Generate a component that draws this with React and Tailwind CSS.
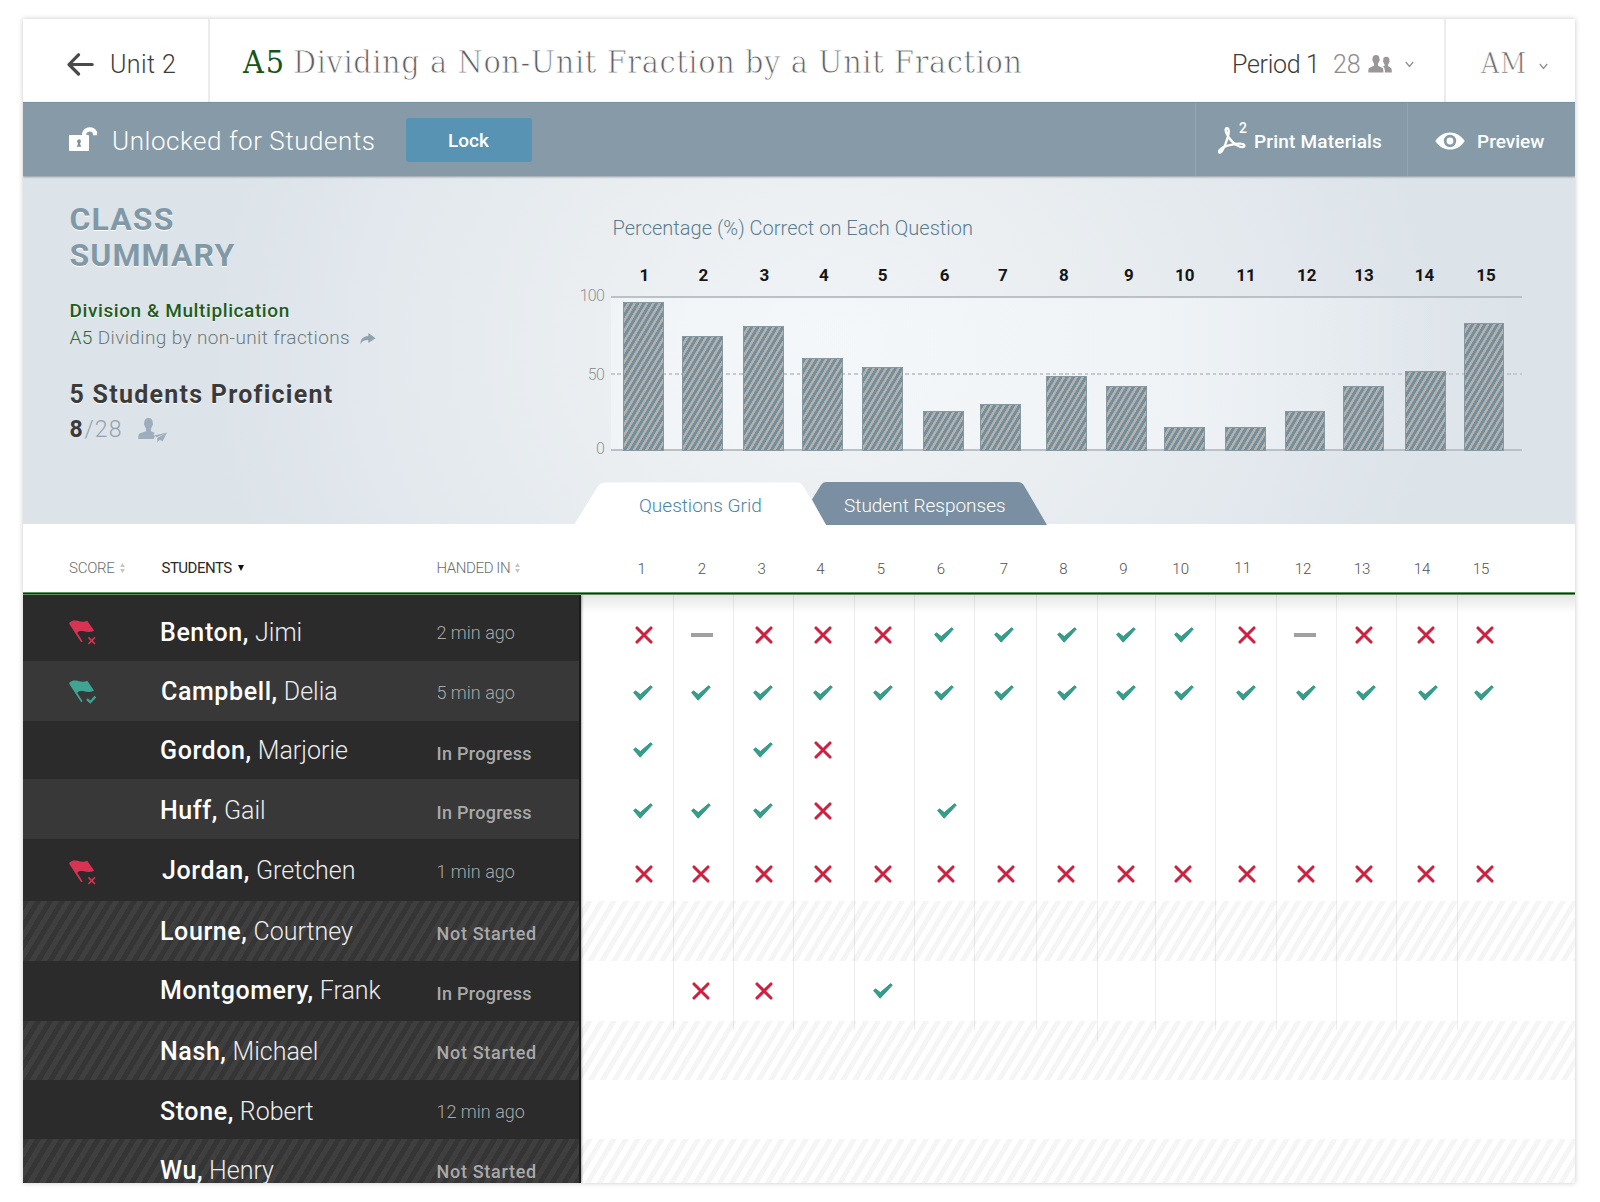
import React from "react";

const COLUMN_EDGES = [581, 673, 733, 793, 854, 914, 974, 1036, 1097, 1155, 1215, 1276, 1336, 1396, 1457, 1575];

const HEADINGS = [641.7, 702, 761.7, 820.5, 881, 941, 1004, 1063.5, 1123.3, 1180.7, 1242.7, 1303, 1362, 1422, 1481];

const MARK_CENTERS = {
  x: [643.7, 701, 763.7, 823.4, 883.3, 945.7, 1006, 1066, 1125.6, 1183, 1246.5, 1305.7, 1364, 1425.5, 1485],
  c: [643.3, 701, 763.3, 823, 882.7, 944, 1003.7, 1066.7, 1126.3, 1184.3, 1245.7, 1305.7, 1366, 1428, 1484.3],
  "-": [0, 702, 0, 0, 0, 0, 0, 0, 0, 0, 0, 1305.3, 0, 0, 0],
};

const BARS = [
  { left: 623.4, height: 149, label: 644.5 },
  { left: 682, height: 115.5, label: 703.3 },
  { left: 743.5, height: 125, label: 764.3 },
  { left: 802.3, height: 93, label: 824 },
  { left: 862.3, height: 84.5, label: 882.7 },
  { left: 923, height: 40.5, label: 944.7 },
  { left: 980.3, height: 47, label: 1003 },
  { left: 1046, height: 75.5, label: 1064 },
  { left: 1106.1, height: 65, label: 1129 },
  { left: 1164, height: 24.5, label: 1184.7 },
  { left: 1225, height: 24.5, label: 1246 },
  { left: 1285, height: 40.5, label: 1306.7 },
  { left: 1343.7, height: 65, label: 1364 },
  { left: 1405.3, height: 80, label: 1424.5 },
  { left: 1464, height: 128, label: 1486 },
];

const ROWS = [
  { last: "Benton,", first: "Jimi", when: "2 min ago", flag: "x", h: 66, name: 46.5, time: 44.3, mark: 40, flagTop: 25, marks: "x-xxxcccccx-xxx" },
  { last: "Campbell,", first: "Delia", when: "5 min ago", flag: "c", h: 60, name: 39.5, time: 38, mark: 32, flagTop: 19, marks: "ccccccccccccccc", shade: "light", indent: 1 },
  { last: "Gordon,", first: "Marjorie", when: "In Progress", h: 58, name: 38.5, time: 39.2, mark: 29, marks: "c cx           " },
  { last: "Huff,", first: "Gail", when: "In Progress", h: 60, name: 40.5, time: 40.2, mark: 32, marks: "cccx c         ", shade: "light" },
  { last: "Jordan,", first: "Gretchen", when: "1 min ago", flag: "x", h: 62, name: 40.5, time: 39.2, mark: 35, flagTop: 21, marks: "xxxxxxxxxxxxxxx", indent: 2 },
  { last: "Lourne,", first: "Courtney", when: "Not Started", h: 60, name: 39.5, time: 39.2, mark: 30, marks: "", shade: "stripe" },
  { last: "Montgomery,", first: "Frank", when: "In Progress", h: 60, name: 38.5, time: 39.2, mark: 30, marks: " xx c          " },
  { last: "Nash,", first: "Michael", when: "Not Started", h: 59, name: 39.5, time: 38.2, mark: 30, marks: "", shade: "stripe" },
  { last: "Stone,", first: "Robert", when: "12 min ago", h: 59, name: 40.5, time: 38.2, mark: 30, marks: "" },
  { last: "Wu,", first: "Henry", when: "Not Started", h: 44, name: 40.5, time: 39.2, mark: 30, marks: "", shade: "stripe" },
];

const SHADES = {
  dark: "bg-[#2b2b2b]",
  light: "bg-[#383838]",
  stripe: "bg-[repeating-linear-gradient(121deg,#353535_0,#353535_5.15px,#3f3f3f_5.15px,#3f3f3f_10.3px)]",
};

const STATUS_STYLES = {
  "In Progress": "font-medium tracking-[0.3px]",
  "Not Started": "font-medium tracking-[0.7px]",
};

function ArrowLeft() {
  return (
    <svg className="h-[23px] w-[27px]" viewBox="0 0 27 23" fill="none" stroke="#4a4a4a" strokeWidth="3.2" strokeLinecap="round" strokeLinejoin="round">
      <path d="M11.5 1.8 L2 11.5 L11.5 21 M2.5 11.5 H25.2" />
    </svg>
  );
}

function Chevron() {
  return (
    <svg className="h-[7px] w-[9px]" viewBox="0 0 9 7" fill="none" stroke="#8f8f8f" strokeWidth="1.3">
      <path d="M.8 1 L4.5 5.4 L8.2 1" />
    </svg>
  );
}

function People() {
  return (
    <svg className="h-[18px] w-[24px]" viewBox="0 0 24 18" fill="#9b9697">
      <path d="M8 0 C10.3 0 11.6 1.6 11.4 4 C11.9 4.2 11.8 5.8 11.1 6.2 C10.8 7.3 10.3 8 10 8.6 V10.4 C11 11.6 14.8 12 15.2 14 C15.4 15.2 15.4 16.3 15.4 17.5 H.3 C.3 16.3 .3 15.2 .5 14 C1 12 5 11.6 6 10.4 V8.6 C5.7 8 5.2 7.3 4.9 6.2 C4.2 5.8 4.1 4.2 4.6 4 C4.4 1.6 5.7 0 8 0Z" />
      <path d="M18.3 1.8 C20.6 1.8 21.7 3.4 21.4 5.4 C21.9 5.8 21.7 7 21.1 7.4 C20.9 8.4 20.3 9 20.1 9.6 V11 C21 12 23.2 12.4 23.6 14.2 C23.8 15.4 23.8 16.5 23.8 17.5 H16.9 C17 14.5 16.8 12.8 14.7 11.6 C15.6 11.5 16.3 11.3 16.6 10.8 V9.6 C16.3 9 15.8 8.4 15.6 7.4 C15 7 14.9 5.8 15.3 5.4 C15 3.4 16 1.8 18.3 1.8Z" />
    </svg>
  );
}

function Unlock() {
  return (
    <svg className="h-[27px] w-[29px]" viewBox="0 0 29 27">
      <path d="M15.2 11 V8.2 A6 6 0 0 1 26 7.5 V10.2" fill="none" stroke="#fff" strokeWidth="4.2" />
      <rect x="0" y="10" width="20" height="16" rx="1" fill="#fff" />
      <path d="M10 14.2 a2.1 2.1 0 0 1 1.1 3.8 l.3 2.6 h.8 v1.2 H7.8 v-1.2 h.8 l.3 -2.6 A2.1 2.1 0 0 1 10 14.2Z" fill="#7a93a1" />
    </svg>
  );
}

function Pdf() {
  return (
    <svg className="h-[28px] w-[28px]" viewBox="0 0 28 28" fill="none" stroke="#fff" strokeWidth="2.3" strokeLinejoin="round">
      <path d="M10.4 9.8 C8.2 6.3 6.3 1.6 8.8 1.2 C11.3 1 11 5.8 10 9.3 C8.5 15 6.2 20.6 3.8 24.4 C2.3 26.6 .4 25.6 1.2 23.8 C2.6 21 9 18.6 14 17.6 C19 16.6 25.3 16.3 26.4 18.4 C26.8 20.6 23 20.8 19.5 18.6 C15.6 16.2 12.2 12.8 10.4 9.8Z" />
    </svg>
  );
}

function Eye() {
  return (
    <svg className="h-[18px] w-[30px]" viewBox="0 0 30 18">
      <path d="M.3 9 C4 3.4 9 .4 15 .4 C21 .4 26 3.4 29.7 9 C26 14.6 21 17.6 15 17.6 C9 17.6 4 14.6 .3 9Z" fill="#fff" />
      <circle cx="15" cy="9" r="4.8" fill="none" stroke="#869ba7" strokeWidth="2.8" />
    </svg>
  );
}

function Share() {
  return (
    <svg className="h-[12px] w-[16px]" viewBox="0 0 16 12" fill="#8fa3af">
      <path d="M8.3 0 L15.6 5.2 L8.3 10 V7 C4.6 6.8 2 8 .6 11.3 C.2 6.2 3 3.4 8.3 3Z" />
    </svg>
  );
}

function PersonPlane() {
  return (
    <svg className="h-[25px] w-[30px]" viewBox="0 0 30 25" fill="#9dadbb">
      <path d="M10.5 0 C13.4 0 15 2 14.7 5 C15.3 5.3 15.1 7.2 14.3 7.7 C14 9.2 13.3 10 13 10.6 V13 C13.5 13.8 15.6 14.5 17 15 L15.2 16.3 L17 18 L15.6 21 H.3 C.3 19.4 .3 18 .6 16.8 C1.3 14.6 6.8 14.4 8 13 V10.6 C7.7 10 7 9.2 6.7 7.7 C5.9 7.2 5.7 5.3 6.3 5 C6 2 7.6 0 10.5 0Z" />
      <path d="M29 14.4 L16.2 17.6 L18.6 19.3 Z M29 14.4 L19.2 20 L19.4 24.4 L21.6 21.8 L24.6 23.2Z" />
    </svg>
  );
}

function Flag({ kind }) {
  const tone = kind === "x" ? "#d93253" : "#3fa492";
  return (
    <svg className="h-[26px] w-[28px]" viewBox="0 0 28 26">
      <path d="M.3 2.8 C4 -.8 8 .8 11.5 1.6 C14 2 16.5 1.6 18.3 .8 L25 10.6 C21 13 18 11.8 15 11.3 C12 10.9 9.8 11 8.2 12.8 L13.6 21.3 L12.2 22.3 L.3 4Z" fill={tone} />
      {kind === "x" ? (
        <path d="M19.4 17.4 L26 24 M26 17.4 L19.4 24" stroke={tone} strokeWidth="1.7" fill="none" />
      ) : (
        <path d="M18 19.2 L21.2 22.2 L26.4 16.6" stroke={tone} strokeWidth="2.3" fill="none" />
      )}
    </svg>
  );
}

function Mark({ kind }) {
  if (kind === "x") {
    return (
      <svg className="h-[18px] w-[18px]" viewBox="0 0 18 18" fill="none" stroke="#d0203f" strokeWidth="3.1" strokeLinecap="round">
        <path d="M2 2 L16 16 M16 2 L2 16" />
      </svg>
    );
  }
  if (kind === "c") {
    return (
      <svg className="h-[16px] w-[20px]" viewBox="0 0 20 16" fill="#359d89" stroke="#2f9784" strokeWidth="1" strokeLinejoin="round">
        <path d="M.6 7.6 L2.6 5.9 L7.3 9.6 L17.6 .8 L19.3 2.1 L7.2 15.2Z" />
      </svg>
    );
  }
  return <div className="-mt-[1px] h-[4px] w-[22px] bg-[#a0a0a0]" />;
}

/* One strip of fifteen columns; each item is centred on its own x position. */
function Strip({ items, centers, width }) {
  return (
    <div className="flex">
      {items.map((item, i) => (
        <div key={i} className="flex shrink-0" style={{ width: COLUMN_EDGES[i + 1] - COLUMN_EDGES[i] }}>
          {item !== null && (
            <div
              className="flex h-5 shrink-0 items-center justify-center"
              style={{ width, marginLeft: centers[i] - COLUMN_EDGES[i] - width / 2 }}
            >
              {item}
            </div>
          )}
        </div>
      ))}
    </div>
  );
}

function SortArrows() {
  return (
    <svg className="h-[10px] w-[5px]" viewBox="0 0 5 10" fill="#c4c4c4">
      <path d="M2.5 0 L4.9 4 H.1Z M2.5 10 L4.9 6 H.1Z" />
    </svg>
  );
}

function TopBar() {
  return (
    <header className="flex h-[83px] items-start bg-white">
      <div className="flex h-full w-[187px] items-start border-r-2 border-[#ececec] pl-[44px]">
        <div className="mt-[34px]"><ArrowLeft /></div>
        <span className="ml-[16px] mt-[31px] text-[25px] font-light leading-[30px] tracking-[0.4px] text-[#3c3c3c]">Unit 2</span>
      </div>
      <h1 className="ml-[33px] mt-[23px] flex whitespace-nowrap font-['DejaVu_Serif_Condensed','DejaVu_Serif',serif] text-[32px] leading-[40px]">
        <span className="w-[50px] tracking-[2px] text-[#17561a]">A5</span>
        <span className="tracking-[0.62px] text-[#5d6064] [-webkit-text-stroke:0.8px_white]">
          Dividing a Non-Unit Fraction by a Unit Fraction
        </span>
      </h1>
      <div className="ml-auto flex h-full items-start">
        <span className="mt-[31px] w-[101px] text-[25px] font-light leading-[30px] tracking-[-0.3px] text-[#3c3c3c]">Period 1</span>
        <span className="mt-[31px] w-[35px] text-[25px] font-light leading-[30px] text-[#8f8b8c]">28</span>
        <div className="mt-[36px]"><People /></div>
        <div className="ml-[13px] mt-[42px]"><Chevron /></div>
      </div>
      <div className="ml-[30px] flex h-full w-[131px] items-start border-l-2 border-[#ececec] pl-[35px]">
        <span className="mt-[26px] w-[58px] font-['DejaVu_Serif_Condensed','DejaVu_Serif',serif] text-[28px] leading-[38px] tracking-[1px] text-[#707070] [-webkit-text-stroke:0.7px_white]">
          AM
        </span>
        <div className="mt-[44px]"><Chevron /></div>
      </div>
    </header>
  );
}

function ActionBar() {
  return (
    <div className="relative z-10 flex h-[74px] items-center border-t border-[#7893a0] bg-[#869ba7] text-white shadow-[0_1px_2px_rgba(60,75,85,0.5)]">
      <div className="ml-[46px] mb-[2px]"><Unlock /></div>
      <span className="ml-[14px] mt-[3px] w-[293.5px] text-[26px] font-light leading-[30px] tracking-[0.55px]">Unlocked for Students</span>
      <button className="mt-[1px] h-[44px] w-[126px] rounded-[3px] bg-[#5993b3] pt-[2px] text-[19px] font-medium">Lock</button>
      <div className="ml-auto flex h-full w-[212px] items-center border-l border-[#93a8b3] pl-[22px]">
        <div className="mt-[2px] w-[21px] shrink-0"><Pdf /></div>
        <span className="mb-[24px] w-[15px] text-[14px] font-medium leading-4">2</span>
        <span className="mt-[4px] whitespace-nowrap text-[19px] font-medium leading-6 tracking-[0.2px]">Print Materials</span>
      </div>
      <div className="flex h-full w-[168px] items-center border-l border-[#93a8b3] pl-[27px]">
        <div className="mt-[3px]"><Eye /></div>
        <span className="ml-[12px] mt-[4px] text-[19px] font-medium leading-6">Preview</span>
      </div>
    </div>
  );
}

function ClassSummary() {
  return (
    <div className="w-[528px] shrink-0 pl-[46.5px] pt-[25px]">
      <h2 className="text-[32px] font-bold leading-[36px] tracking-[1.1px] text-[#8199a6] [text-shadow:0_1px_0_#fff]">
        CLASS
        <br />
        SUMMARY
      </h2>
      <p className="mt-[24px] text-[19px] font-medium leading-[28px] tracking-[0.6px] text-[#1c5c1c] [text-shadow:0_1px_0_#fff]">
        Division &amp; Multiplication
      </p>
      <div className="-mt-[1px] flex items-center text-[19px] font-light leading-[28px] tracking-[0.38px] text-[#6d7b7d]">
        <span className="mr-[5px] text-[#2d6a2d]">A5</span>
        <span>Dividing by non-unit fractions</span>
        <span className="ml-[10px] mt-[1px]"><Share /></span>
      </div>
      <p className="mt-[27px] text-[25px] font-bold leading-[32px] tracking-[1.25px] text-[#3b3b3b] [text-shadow:0_1px_0_#fff]">
        5 Students Proficient
      </p>
      <div className="mt-[4px] flex items-start text-[23px] leading-[30px]">
        <span className="w-[15px] font-bold text-[#3b3b3b]">8</span>
        <span className="w-[53px] font-light tracking-[1.2px] text-[#93a2af]">/28</span>
        <span className="mt-[3px]"><PersonPlane /></span>
      </div>
    </div>
  );
}

function Chart() {
  return (
    <div className="min-w-0 grow pt-[38px]">
      <h3 className="pl-[61.5px] text-[20px] font-light leading-[28px] tracking-[0.02px] text-[#5b7d8f]">Percentage (%) Correct on Each Question</h3>
      <div className="mt-[23px] flex h-5 pl-[61px]">
        {BARS.map((bar, i) => (
          <span
            key={i}
            className="w-6 shrink-0 text-center text-[17px] font-bold leading-5 text-[#151515]"
            style={{ marginLeft: bar.label - 12 - (i ? BARS[i - 1].label + 12 : 612) }}
          >
            {i + 1}
          </span>
        ))}
      </div>
      <div className="mt-[11px] flex">
        <div className="flex h-[156px] w-[53px] flex-col items-end text-[16px] font-light leading-[16px] tracking-[-0.8px] text-[#949494]">
          <span className="-mt-[8px]">100</span>
          <span className="mt-[63px]">50</span>
          <span className="mt-[58px]">0</span>
        </div>
        <div className="relative ml-[7px] h-[155px] w-[911px] border-y-2 border-[#bcc1c7] bg-[linear-gradient(90deg,rgba(248,251,253,0.45)_0%,rgba(248,251,253,0.5)_60%,rgba(248,251,253,0)_100%)]">
          <div className="absolute inset-x-0 top-[75px] h-[2px] bg-[repeating-linear-gradient(90deg,#c6cace_0,#c6cace_3.6px,transparent_3.6px,transparent_6.4px)]" />
          <div className="relative flex h-[153px] items-end">
            {BARS.map((bar, i) => (
              <div
                key={i}
                className="w-[40.7px] shrink-0 border border-[#8699a1] bg-[repeating-linear-gradient(121deg,#738f9b_0,#738f9b_2.5px,#b3b0ad_2.9px,#b3b0ad_5px,#738f9b_5.35px)]"
                style={{ height: bar.height, marginLeft: bar.left - (i ? BARS[i - 1].left + 40.7 : 611) }}
              />
            ))}
          </div>
        </div>
      </div>
      <div className="relative mt-[30px] ml-[23px] flex h-[43px] w-[474px] text-[19px] leading-[26px]">
        <svg className="absolute inset-0 h-[43px] w-[474px]" viewBox="0 0 474 43">
          <path d="M238 17.5 L247 3 Q249 0 252 0 H444 Q448 0 450 3.5 L473 43 H252Z" fill="#7a8fa1" />
          <path d="M0 43 L24 4 Q27 .6 31 .6 H223 Q227 .6 229 4 L252 43Z" fill="#fff" />
        </svg>
        <span className="relative ml-[65px] mt-[11px] w-[205px] font-light text-[#4587ad]">Questions Grid</span>
        <span className="relative mt-[11px] font-light text-white">Student Responses</span>
      </div>
    </div>
  );
}

function TableHead() {
  return (
    <div className="flex h-[68px] bg-white text-[15px] leading-5">
      <div className="flex w-[558px] shrink-0 items-start pt-[34px] font-light text-[#6b6b6b]">
        <div className="ml-[46px] flex w-[92.5px] items-center gap-[5px] tracking-[-0.25px]">
          SCORE <SortArrows />
        </div>
        <div className="flex w-[275px] items-center gap-[6px] font-normal tracking-[-0.5px] text-[#2a2a2a]">
          STUDENTS
          <svg className="h-[6px] w-[6px]" viewBox="0 0 6 6" fill="#111"><path d="M0 0 H6 L3 6Z" /></svg>
        </div>
        <div className="flex items-center gap-[5px] tracking-[-0.4px]">
          HANDED IN <SortArrows />
        </div>
      </div>
      <div className="pt-[35px] font-light text-[#505050]">
        <Strip items={HEADINGS.map((_, i) => <span key={i} className={i === 10 ? "-mt-[2px]" : ""}>{i + 1}</span>)} centers={HEADINGS} width={24} />
      </div>
    </div>
  );
}

function StudentRow({ row }) {
  return (
    <div className={"flex items-start overflow-hidden " + SHADES[row.shade || "dark"]} style={{ height: row.h }}>
      <div className="ml-[46px] w-[91px] shrink-0" style={{ paddingTop: row.flagTop || 0 }}>
        {row.flag && <Flag kind={row.flag} />}
      </div>
      <div className="w-[276.5px] shrink-0 whitespace-nowrap text-[25px] leading-[30px] text-white" style={{ marginTop: row.name - 23.5, paddingLeft: row.indent || 0 }}>
        <span className="font-medium tracking-[0.6px]">{row.last}</span>
        <span className="ml-[6px] font-light text-[#ededed]">{row.first}</span>
      </div>
      <div
        className={"whitespace-nowrap text-[18px] leading-6 text-[#a9a9a9] " + (STATUS_STYLES[row.when] || "font-light")}
        style={{ marginTop: row.time - 18.2 }}
      >
        {row.when}
      </div>
    </div>
  );
}

function AnswerRow({ row }) {
  const kinds = row.marks.split("");
  const stripe = row.shade === "stripe"
    ? "bg-[repeating-linear-gradient(121deg,#ffffff_0,#ffffff_4.9px,#f5f5f5_5.4px,#f5f5f5_10px,#ffffff_10.3px)]"
    : "bg-white";
  return (
    <div className={stripe} style={{ height: row.h, paddingTop: row.mark - 10 }}>
      <Strip
        items={kinds.map((k) => (k === " " ? null : <Mark key={k} kind={k} />))}
        centers={kinds.map((k, i) => (k === "c" && i === 5 && row.last === "Huff," ? 947 : k === " " ? 0 : MARK_CENTERS[k][i]))}
        width={24}
      />
    </div>
  );
}

export default function App() {
  return (
    <div className="h-[1202px] w-[1600px] overflow-hidden bg-white pl-[23px] pt-[19px] font-['Roboto',sans-serif]">
      <div className="h-[1164px] w-[1552px] overflow-hidden bg-white shadow-[0_0_5px_rgba(0,0,0,0.22)]">
        <TopBar />
        <ActionBar />
        <section className="flex h-[348px] bg-[radial-gradient(ellipse_620px_540px_at_800px_170px,#f1f4f7_0%,#eaeef1_40%,#e2e8ed_75%,#dce3e9_100%)]">
          <ClassSummary />
          <Chart />
        </section>
        <TableHead />
        <div className="h-[3px] border-y border-[#5f8f60] bg-[#10390f]" />
        <div className="flex h-[588px] overflow-hidden">
          <div className="relative z-10 w-[558px] shrink-0 border-r-2 border-[#1c1c1c] shadow-[1px_0_2px_rgba(0,0,0,0.35)]">
            {ROWS.map((row) => <StudentRow key={row.last} row={row} />)}
          </div>
          <div className="relative grow">
            {ROWS.map((row) => <AnswerRow key={row.last} row={row} />)}
            <div className="absolute left-[0.5px] top-0 flex">
              {COLUMN_EDGES.slice(1, -1).map((edge, i) => (
                <div
                  key={edge}
                  className={"border-r border-black/7 " + (i === 7 ? "h-[446px]" : "h-[435px]")}
                  style={{ width: edge - COLUMN_EDGES[i] }}
                />
              ))}
            </div>
            <div className="absolute inset-x-0 top-0 h-[18px] bg-linear-to-b from-black/10 to-transparent" />
          </div>
        </div>
      </div>
    </div>
  );
}
